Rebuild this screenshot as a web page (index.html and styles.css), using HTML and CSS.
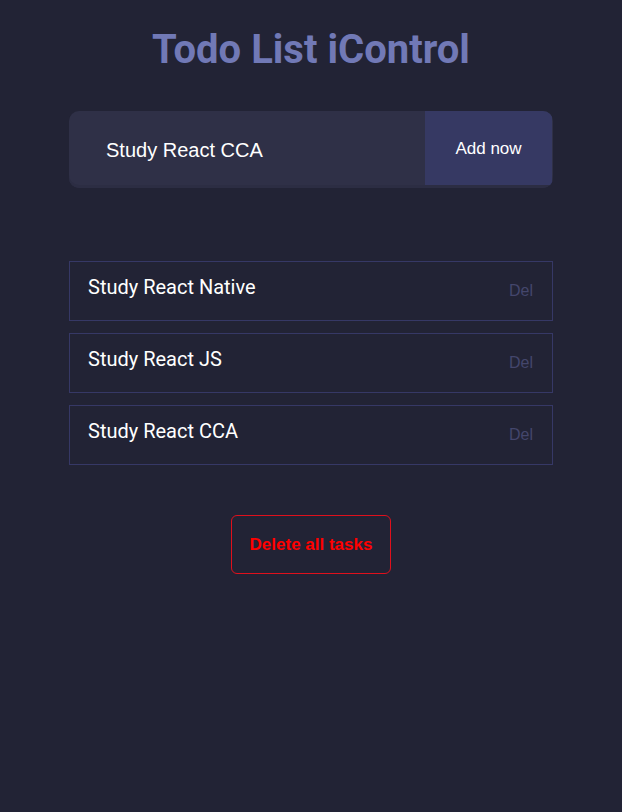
FILE: index.html
```html
<!DOCTYPE html>
<html>
<head>
<meta charset="utf-8">
<link rel="stylesheet" href="styles.css">
</head>
<body>
<div class="app">
  <h1 class="title">Todo List iControl</h1>
  <form class="add-form">
    <input class="add-input" type="text" value="Study React CCA">
    <button class="add-btn" type="button">Add now</button>
  </form>
  <ul class="list">
    <li class="item"><span class="item-text">Study React Native</span><span class="del">Del</span></li>
    <li class="item"><span class="item-text">Study React JS</span><span class="del">Del</span></li>
    <li class="item"><span class="item-text">Study React CCA</span><span class="del">Del</span></li>
  </ul>
  <div class="footer">
    <button class="clear-btn" type="button">Delete all tasks</button>
  </div>
</div>
</body>
</html>
```
FILE: styles.css
```css
html, body {
  margin: 0;
  padding: 0;
  background: #222335;
  height: 100%;
}
.app {
  width: 484px;
  margin: 0 auto;
  padding-top: 26px;
  display: flex;
  flex-direction: column;
}
.title {
  margin: 0;
  text-align: center;
  font-family: Roboto, sans-serif;
  font-weight: 700;
  font-size: 40px;
  line-height: 48px;
  color: #7179b6;
}
.add-form {
  margin-top: 37px;
  display: flex;
  height: 77px;
  background: #2f3047;
  border-radius: 10px;
  overflow: hidden;
  box-shadow: inset 0 -3px 0 #2c2d43;
}
.add-input {
  flex: 1;
  min-width: 0;
  border: none;
  outline: none;
  background: transparent;
  color: #ffffff;
  font-family: "Liberation Sans", Arial, sans-serif;
  font-size: 20px;
  padding: 2px 0 0 37px;
  height: 77px;
  box-sizing: border-box;
}
.add-btn {
  width: 127px;
  height: 74px;
  border: none;
  background: #363963;
  color: #ffffff;
  font-family: "Liberation Sans", Arial, sans-serif;
  font-size: 17px;
  margin-right: 1px;
  padding: 2px 0 0;
}
.list {
  list-style: none;
  margin: 73px 0 0;
  padding: 0;
  display: flex;
  flex-direction: column;
  gap: 12px;
}
.item {
  height: 60px;
  box-sizing: border-box;
  border: 1px solid #363866;
  display: flex;
  justify-content: space-between;
  align-items: flex-start;
  padding: 0 19px 0 18px;
}
.item-text {
  font-family: Roboto, sans-serif;
  font-weight: 400;
  font-size: 20px;
  line-height: 24px;
  color: #ffffff;
  margin-top: 13px;
}
.del {
  font-family: "Liberation Sans", Arial, sans-serif;
  font-size: 16px;
  line-height: 20px;
  color: #44466c;
  margin-top: 19px;
}
.footer {
  display: flex;
  justify-content: center;
  margin-top: 50px;
}
.clear-btn {
  width: 160px;
  height: 59px;
  background: transparent;
  border: 1px solid #e0101c;
  border-radius: 6px;
  color: #ff0000;
  font-family: "Liberation Sans", Arial, sans-serif;
  font-weight: 700;
  font-size: 17px;
  padding: 0;
}
```
